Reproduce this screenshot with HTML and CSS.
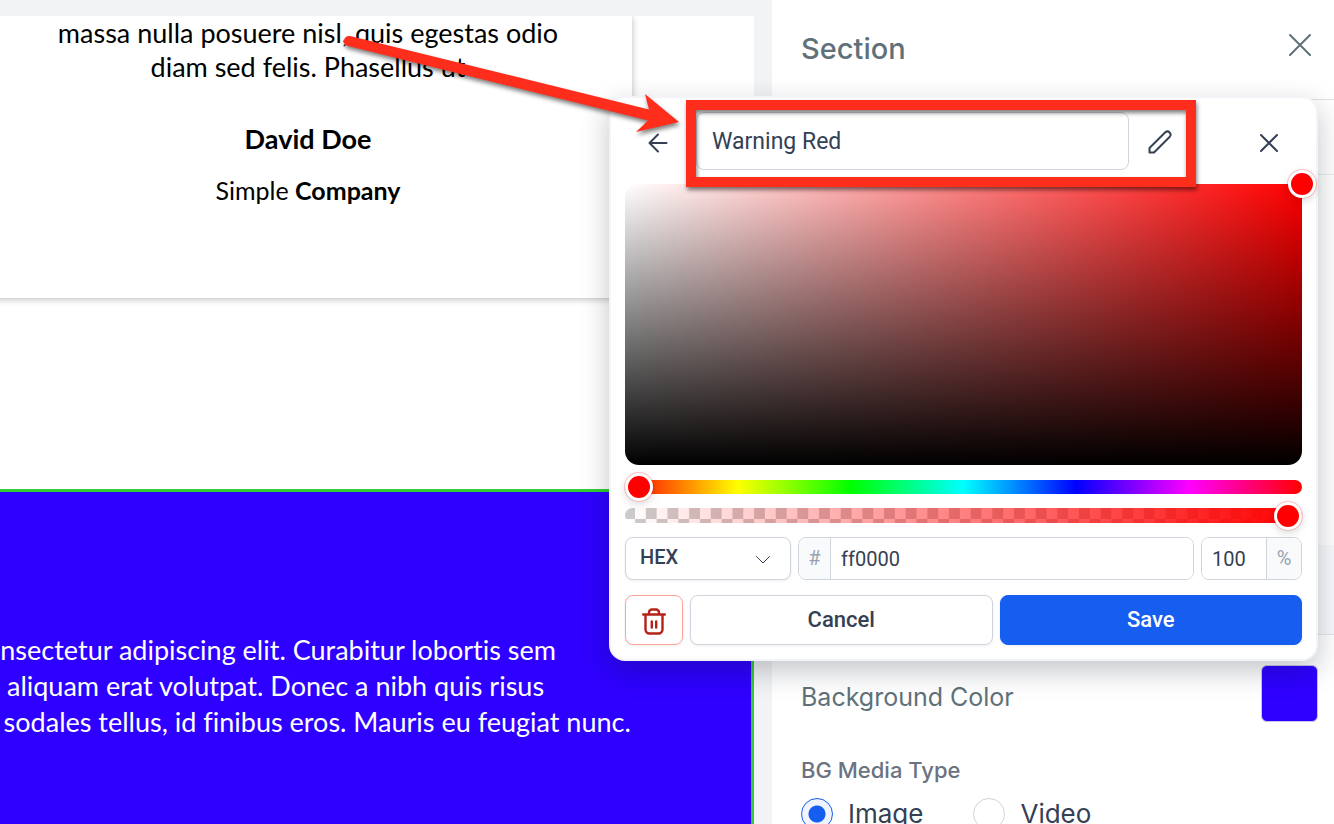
FILE: index.html
```html
<!DOCTYPE html>
<html lang="en">
<head>
<meta charset="utf-8">
<title>Section settings</title>
<link rel="stylesheet" href="styles.css">
</head>
<body>
<div class="editor">
  <main class="preview">
    <article class="testimonial">
      <p class="quote">massa nulla posuere nisl, quis egestas odio<br>diam sed felis. Phasellus ut</p>
      <p class="author">David Doe</p>
      <p class="company">Simple <strong>Company</strong></p>
    </article>
    <section class="banner">
      <p class="banner-text">onsectetur adipiscing elit. Curabitur lobortis sem<br>n aliquam erat volutpat. Donec a nibh quis risus<br>s sodales tellus, id finibus eros. Mauris eu feugiat nunc.</p>
    </section>
  </main>

  <aside class="sidebar">
    <header class="sidebar-head">
      <h1 class="sidebar-title">Section</h1>
      <button class="icon-button sidebar-close" type="button" aria-label="Close section">
        <svg width="22" height="22" viewBox="0 0 22 22"><path d="M1 1 21 21M21 1 1 21"/></svg>
      </button>
    </header>
    <div class="tabs"></div>
    <div class="options"></div>
    <div class="group-head"></div>
    <div class="group">
      <div class="color-row">
        <label class="color-label" for="bg-color">Background Color</label>
        <button class="swatch" id="bg-color" type="button" aria-label="Background Color"></button>
      </div>
      <fieldset class="media">
        <legend class="media-legend">BG Media Type</legend>
        <div class="radios">
          <label class="radio-label"><input class="radio" type="radio" name="media" checked>Image</label>
          <label class="radio-label"><input class="radio" type="radio" name="media">Video</label>
        </div>
      </fieldset>
    </div>
  </aside>
</div>

<section class="picker" aria-label="Color picker">
  <header class="picker-head">
    <button class="icon-button back" type="button" aria-label="Back">
      <svg width="20" height="20" viewBox="0 0 20 20"><path d="M18.500 10H1.500M10 1.500 1.500 10l8.500 8.500"/></svg>
    </button>
    <input class="name-input" type="text" value="Warning Red" aria-label="Color name">
    <button class="icon-button edit" type="button" aria-label="Rename">
      <svg width="24" height="24" viewBox="0 0 24 24"><path d="M1.500 22.500V18L17.300 2.200a3.200 3.200 0 0 1 4.500 4.500L6 22.500Z"/></svg>
    </button>
    <button class="icon-button dismiss" type="button" aria-label="Close picker">
      <svg width="18" height="18" viewBox="0 0 18 18"><path d="M1 1 17 17M17 1 1 17"/></svg>
    </button>
  </header>
  <div class="spectrum"><span class="knob"></span></div>
  <input class="slider hue" type="range" min="0" max="360" value="0" aria-label="Hue">
  <input class="slider alpha" type="range" min="0" max="100" value="100" aria-label="Opacity">
  <div class="fields">
    <div class="format">
      <select class="format-select" aria-label="Format"><option>HEX</option><option>RGB</option></select>
      <svg class="chevron" width="14" height="8" viewBox="0 0 14 8"><path d="M.5.5 7 7 13.500.5"/></svg>
    </div>
    <div class="field hex"><label class="affix" for="hex">#</label><input class="field-input" id="hex" type="text" value="ff0000"></div>
    <div class="field percent"><input class="field-input" id="opacity" type="text" value="100"><label class="affix" for="opacity">%</label></div>
  </div>
  <div class="actions">
    <button class="button delete" type="button" aria-label="Delete color">
      <svg width="24" height="27" viewBox="0 0 24 27"><path d="M1.200 6.500H22.800M7 6V4.500A3 3 0 0 1 10 1.500H14A3 3 0 0 1 17 4.500V6M3.500 7V21.500A4 4 0 0 0 7.500 25.500H16.500A4 4 0 0 0 20.500 21.500V7M9.800 13.500V19.500M14.200 13.500V19.500"/></svg>
    </button>
    <button class="button cancel" type="button">Cancel</button>
    <button class="button save" type="button">Save</button>
  </div>
</section>

<svg class="annotation" width="880" height="210" viewBox="0 0 880 210" aria-hidden="true">
  <rect class="callout" x="361" y="105" width="500" height="77"/>
  <path class="arrow" d="M20 36 319 109.500 315 94 349 122 306 132 318 120.500 18 46A5 5 0 0 1 20 36Z"/>
</svg>
</body>
</html>
```
FILE: styles.css
```css
* {
  box-sizing: border-box;
}

body {
  margin: 0;
  height: 100vh;
  position: relative;
  overflow: hidden;
  background: #f2f3f5;
  font-family: Inter, "Liberation Sans", sans-serif;
}

p, h1, fieldset {
  margin: 0;
  padding: 0;
  border: 0;
}

button, input, select {
  font: inherit;
  color: inherit;
}

svg {
  display: block;
  fill: none;
  stroke: currentColor;
  stroke-width: 2;
  stroke-linecap: round;
  stroke-linejoin: round;
}

.editor {
  display: grid;
  grid-template-columns: minmax(0, 1fr) 562px;
  height: 100vh;
}

/* Page preview */
.preview {
  display: flex;
  flex-direction: column;
  margin: 16px 18px 0 0;
  overflow: hidden;
  background: #fff;
  font-family: Lato, "Liberation Sans", sans-serif;
  font-size: 27px;
  font-variant-ligatures: none;
  line-height: 34px;
}

.testimonial {
  margin: 0 122px 191px -16px;
  padding-bottom: 91px;
  background: #fff;
  box-shadow: 0 1px 7px rgba(0, 0, 0, .28);
  color: #000;
  text-align: center;
}

.author {
  margin-top: 38px;
  font-weight: 700;
}

.company {
  margin-top: 17px;
  font-size: 25px;
}

.banner {
  flex: 1;
  padding-top: 140px;
  border-top: 3px solid #32cd32;
  border-right: 3px solid #32cd32;
  background: #2e00ff;
  color: #fff;
  line-height: 36px;
}

.banner-text {
  margin-left: -15px;
  white-space: nowrap;
}

/* Settings sidebar */
.sidebar {
  display: flex;
  flex-direction: column;
  overflow: hidden;
  background: #fff;
  color: #607179;
}

.sidebar-head {
  display: flex;
  align-items: center;
  justify-content: space-between;
  flex: none;
  height: 100px;
  padding: 0 23px 2px 29px;
  border-bottom: 1px solid #dfe3e8;
}

.sidebar-title {
  font-size: 29px;
  font-weight: 500;
}

.sidebar-close {
  margin-bottom: 8px;
}

.tabs {
  flex: none;
  height: 75px;
  border-bottom: 1px solid #e8ebf0;
}

.options {
  flex: none;
  height: 370px;
}

.group-head {
  flex: none;
  height: 90px;
  border-bottom: 1px solid #e2e6ee;
  background: #f8f9fb;
}

.group {
  padding: 30px 16px 0 29px;
}

.color-row {
  display: flex;
  align-items: center;
  justify-content: space-between;
}

.color-label {
  padding-top: 6px;
  font-size: 25px;
}

.swatch {
  width: 57px;
  height: 57px;
  border: 1px solid #c9c5ea;
  border-radius: 6px;
  background: #2e00ff;
}

.media {
  margin-top: 33px;
}

.media-legend {
  padding: 0;
  color: #6b7280;
  font-size: 22px;
  font-weight: 500;
  line-height: 30px;
}

.radios {
  display: flex;
  gap: 50px;
  margin-top: 13px;
}

.radio-label {
  display: flex;
  align-items: center;
  gap: 15px;
  color: #344054;
  font-size: 26px;
  line-height: 32px;
}

.radio {
  appearance: none;
  width: 32px;
  height: 32px;
  margin: 0;
  border: 1px solid #d0d5dd;
  border-radius: 50%;
}

.radio:checked {
  border-color: #155eef;
  background: radial-gradient(circle, #155eef 8px, #eff4ff 9px);
}

/* Color picker */
.picker {
  position: absolute;
  top: 96px;
  right: 16px;
  width: 709px;
  padding: 14px;
  border: 2px solid #f2f4f7;
  border-radius: 16px;
  background: #fff;
  box-shadow: 0 10px 28px rgba(16, 24, 40, .25);
  color: #344054;
  font-family: Roboto, "Liberation Sans", sans-serif;
  font-size: 23px;
}

.icon-button {
  display: flex;
  align-items: center;
  justify-content: center;
  padding: 0;
  border: 0;
  background: none;
}

.picker-head {
  display: flex;
  align-items: center;
  height: 58px;
}

.back {
  width: 65px;
  margin-right: 6px;
  padding-top: 4px;
}

.name-input {
  flex: 1;
  min-width: 0;
  height: 58px;
  padding: 0 15px;
  border: 1px solid #d0d5dd;
  border-radius: 8px;
  background: #fff;
  outline: 0;
}

.edit {
  width: 62px;
  padding-top: 2px;
  margin-right: 45px;
}

.dismiss {
  width: 66px;
  padding-top: 4px;
}

.spectrum {
  position: relative;
  height: 281px;
  margin-top: 14px;
  border-radius: 14px 0 14px 14px;
  background: linear-gradient(to top, #000, transparent), linear-gradient(to right, #fff, transparent), #f00;
}

.knob {
  position: absolute;
  top: -14px;
  right: -14px;
  width: 28px;
  height: 28px;
  border: 3px solid #fff;
  border-radius: 50%;
  background: #f00;
  box-shadow: 0 0 0 1px rgba(255, 0, 0, .22), 0 3px 8px rgba(0, 0, 0, .15);
}

.slider {
  display: block;
  appearance: none;
  width: 100%;
  height: 14px;
  margin: 15px 0 0;
  border-radius: 8px;
}

.hue {
  background: linear-gradient(to right, #f00, #ff0, #0f0, #0ff, #00f, #f0f, #f00);
}

.alpha {
  height: 15px;
  margin-top: 14px;
  background:
    linear-gradient(to right, transparent, #f00),
    repeating-conic-gradient(#fff 0 25%, #ccc 0 50%) 10px 11px / 3.2% 22px;
}

.slider::-webkit-slider-thumb {
  appearance: none;
  width: 28px;
  height: 28px;
  border: 3px solid #fff;
  border-radius: 50%;
  background: #f00;
  box-shadow: 0 0 0 1px rgba(255, 0, 0, .22), 0 3px 8px rgba(0, 0, 0, .15);
}

.fields {
  display: flex;
  gap: 7px;
  height: 43px;
  margin-top: 14px;
  font-size: 20px;
}

.format {
  position: relative;
  width: 166px;
}

.format-select {
  appearance: none;
  width: 100%;
  height: 100%;
  padding: 0 14px 3px;
  border: 1px solid #d0d5dd;
  border-radius: 8px;
  background: #fff;
  box-shadow: 0 1px 3px rgba(16, 24, 40, .08);
  font-weight: 500;
}

.chevron {
  position: absolute;
  top: 19px;
  right: 21px;
  stroke-width: 1;
}

.field {
  display: flex;
  overflow: hidden;
  border: 1px solid #d0d5dd;
  border-radius: 8px;
}

.hex {
  flex: 1;
}

.percent {
  width: 101px;
}

.field-input {
  flex: 1;
  width: 0;
  min-width: 0;
  padding: 0 10px;
  border: 0;
  background: #fff;
  outline: 0;
}

.affix {
  display: flex;
  align-items: center;
  justify-content: center;
  width: 32px;
  padding-bottom: 2px;
  border-right: 1px solid #d0d5dd;
  background: #f9fafb;
  color: #98a2b3;
}

.percent .affix {
  width: 35px;
  border-right: 0;
  border-left: 1px solid #d0d5dd;
}

.actions {
  display: flex;
  gap: 7px;
  margin-top: 15px;
  font-size: 22px;
}

.button {
  display: flex;
  flex: 1;
  align-items: center;
  justify-content: center;
  height: 50px;
  padding: 0 0 2px;
  border: 1px solid #d0d5dd;
  border-radius: 8px;
  background: #fff;
  box-shadow: 0 1px 3px rgba(16, 24, 40, .08);
  font-weight: 500;
}

.delete {
  flex: 0 0 58px;
  padding: 3px 0 0;
  border-color: #fda29b;
  color: #b42318;
}

.delete svg {
  stroke-width: 2.4;
}

.save {
  border-color: #155eef;
  background: #155eef;
  color: #fff;
}

/* Callout drawn over the page */
.annotation {
  position: absolute;
  top: 0;
  right: 124px;
  overflow: visible;
  pointer-events: none;
  filter: drop-shadow(1px 3px 2px rgba(0, 0, 0, .5));
}

.callout {
  stroke: #ff2d1c;
  stroke-width: 10;
  stroke-linejoin: miter;
}

.arrow {
  fill: #ff2d1c;
  stroke: none;
}
```
